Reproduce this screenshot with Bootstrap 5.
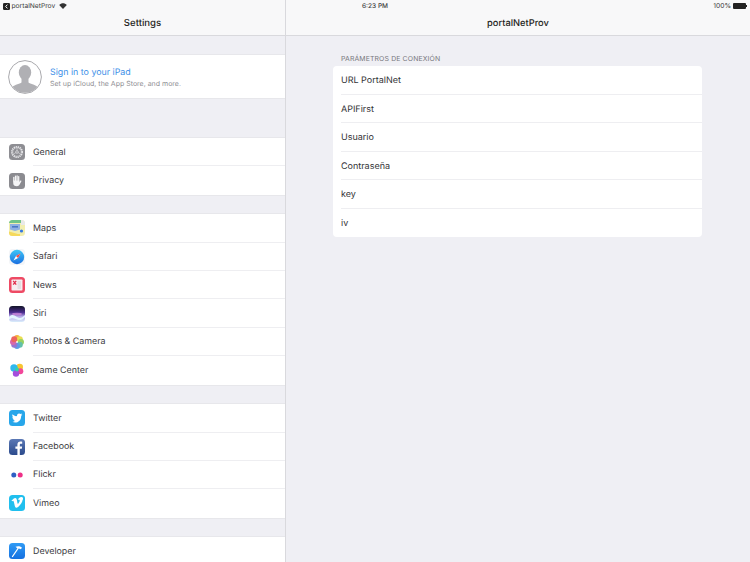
<!DOCTYPE html>
<html lang="en">
<head>
<meta charset="utf-8">
<title>Settings</title>
<link rel="stylesheet" href="https://cdn.jsdelivr.net/npm/bootstrap@5.3.0/dist/css/bootstrap.min.css">
<style>
html,body{height:562px;overflow:hidden}
body{font-family:Inter,"Liberation Sans",sans-serif;background:#efeff4;color:#2b2b2e;font-size:9px;position:relative;text-rendering:geometricPrecision}
.statusline{position:absolute;top:0;left:0;right:0;height:12px;line-height:12px;font-size:6.7px;color:#3a3a3c;z-index:2;padding:0 3px 0 3px}
.statusleft{width:359px;flex:none}
.statusapp{margin:0 4px 0 1.500px}
.statustime{font-weight:500;font-size:6.5px}
.statusright{margin-left:auto;gap:2px}
.statusline svg{flex:none;display:block}
.batterybody{width:12.500px;height:6px;background:#222;border-radius:1px;flex:none}
.batterytip{width:1.200px;height:2px;background:#222;flex:none;margin-left:-1.700px}
.shell{height:562px}
.sidepane{width:286px;flex:none;border-right:1px solid #d9d9dd;height:562px;overflow:hidden}
.mainpane{flex:1 1 auto;min-width:0}
.headbar{height:36px;background:#f8f8f9;border-bottom:1px solid #d9d9dd;padding-top:12px;font-size:9.6px;font-weight:500;color:#1f1f22;line-height:24px;text-align:center}
.headbar-app{font-size:9.3px}
.setgroup{background:#fff;border-top:1px solid #e7e7eb;border-bottom:1px solid #e7e7eb}
.gap-first{margin-top:18px}
.gap-signin{margin-top:38px}
.gap-next{margin-top:17.5px}
.signin{height:45px;padding-left:8px;gap:8px}
.signtitle{color:#3d8fe8;font-size:8.85px;line-height:12px;padding-top:1px}
.signsub{color:#8f8f94;font-size:7px;line-height:9px}
.setrow{height:28.4px;padding-left:8.5px;gap:8.5px}
.setlabel{flex:1 1 auto;height:100%;display:flex;align-items:center;border-bottom:1px solid #eeeef1;font-size:8.9px;color:#3a3a3e;padding-top:1px}
.setrow:last-child .setlabel{border-bottom:0}
.iconbox{width:16px;height:16px;flex:none;display:block}
.formwrap{padding:0 48px 0 47px}
.formhead{font-size:6.9px;letter-spacing:.13px;color:#77777c;line-height:9px;padding:17.500px 0 3.500px 8px;text-transform:uppercase}
.formcard{background:#fff;border-radius:4px;overflow:hidden}
.formrow{height:28.5px;display:flex;align-items:center;margin-left:8px;border-bottom:1px solid #eeeef1;font-size:9px;color:#333336;padding-top:2px}
.formrow:last-child{border-bottom:0}
</style>
</head>
<body>
<div class="statusline d-flex align-items-center">
  <div class="statusleft d-flex align-items-center">
    <svg width="7" height="7" viewBox="0 0 7 7"><rect width="7" height="7" rx="1.200" fill="#222"/><path d="M4.400 1.600 2.700 3.500l1.700 1.900" stroke="#fff" stroke-width="1" fill="none"/></svg>
    <span class="statusapp">portalNetProv</span>
    <svg width="8" height="6" viewBox="0 0 14 11"><path d="M7 11 0 3.500C4-.8 10-.8 14 3.500Z" fill="#333"/></svg>
  </div>
  <div class="statustime">6:23 PM</div>
  <div class="statusright d-flex align-items-center">
    <span>100%</span>
    <div class="batterybody"></div>
    <div class="batterytip"></div>
  </div>
</div>

<div class="shell d-flex">
  <aside class="sidepane">
    <div class="headbar">Settings</div>
    <div class="setgroup gap-first signin d-flex align-items-center">
      <svg width="34" height="34" viewBox="0 0 34 34"><defs><clipPath id="cp"><circle cx="17" cy="17" r="15.800"/></clipPath></defs><circle cx="17" cy="17" r="16.400" fill="#fff" stroke="#a9a9ad" stroke-width="1"/><g clip-path="url(#cp)" fill="#b0b0b4"><ellipse cx="17" cy="12.500" rx="6.200" ry="7.600"/><path d="M13.500 18h7v4.500c3 2 8.500 2.300 9.500 5.500V34H4v-6c1-3.200 6.500-3.500 9.500-5.500Z"/></g></svg>
      <div>
        <div class="signtitle">Sign in to your iPad</div>
        <div class="signsub">Set up iCloud, the App Store, and more.</div>
      </div>
    </div>

    <div class="setgroup gap-signin">
      <div class="setrow d-flex align-items-center">
        <svg class="iconbox" viewBox="0 0 16 16"><rect width="16" height="16" rx="3.500" fill="#8e8e93"/><circle cx="8" cy="8" r="5.200" fill="none" stroke="#e6e6e9" stroke-width="1.600" stroke-dasharray="1.300 .75"/><circle cx="8" cy="8" r="4.300" fill="none" stroke="#e6e6e9" stroke-width=".6"/><path d="M8 4v2.800M4.500 10l2.500-1.400M11.500 10 9 8.600" stroke="#d0d0d4" stroke-width=".7"/><circle cx="8" cy="8" r="1.300" fill="none" stroke="#e6e6e9" stroke-width=".7"/></svg>
        <div class="setlabel">General</div>
      </div>
      <div class="setrow d-flex align-items-center">
        <svg class="iconbox" viewBox="0 0 16 16"><rect width="16" height="16" rx="3.500" fill="#8b8b90"/><path d="M4.800 8V4.300M6.500 7.500V3M8.100 7.500V2.800M9.700 7.800V3.600" stroke="#f5f5f6" stroke-width="1.250" stroke-linecap="round"/><path d="M4.200 7.500h6.100v1.600l.9-1.300c.6-.7 1.500-.1 1.100.7l-1.700 3.100c-.6 1.100-1.400 1.700-2.700 1.700-2.300 0-3.700-1.100-3.700-3.200Z" fill="#f5f5f6"/></svg>
        <div class="setlabel">Privacy</div>
      </div>
    </div>

    <div class="setgroup gap-next">
      <div class="setrow d-flex align-items-center">
        <svg class="iconbox" viewBox="0 0 16 16"><rect width="16" height="16" rx="3.500" fill="#f2eeb0"/><path d="M0 3.500A3.500 3.500 0 0 1 3.500 0H12v3H0Z" fill="#6fc48a"/><path d="M12 0h.5A3.500 3.500 0 0 1 16 3.500V5h-4Z" fill="#e9e9ea"/><path d="M1 4h10v5.500L6 11 1 9.500Z" fill="#8fb0e2"/><rect x="3" y="6" width="6" height="1.600" fill="#4a77c4"/><path d="M0 11.500 9 14h2v2H3.500A3.500 3.500 0 0 1 0 12.500Z" fill="#f5d95c"/><circle cx="12.500" cy="11" r="1.600" fill="#3478e0"/></svg>
        <div class="setlabel">Maps</div>
      </div>
      <div class="setrow d-flex align-items-center">
        <svg class="iconbox" viewBox="0 0 16 16"><defs><linearGradient id="sf" x1="0" y1="0" x2="0" y2="1"><stop offset="0" stop-color="#3ec6f7"/><stop offset="1" stop-color="#1a6fe0"/></linearGradient></defs><rect width="16" height="16" rx="3.500" fill="#f3f5f8"/><circle cx="8" cy="8" r="7.200" fill="url(#sf)"/><path d="M11.500 4.500 9 9 4.500 11.500 7 7Z" fill="#fff"/><path d="M11.500 4.500 9 9 7 7Z" fill="#f0483e"/></svg>
        <div class="setlabel">Safari</div>
      </div>
      <div class="setrow d-flex align-items-center">
        <svg class="iconbox" viewBox="0 0 16 16"><rect width="16" height="16" rx="3.500" fill="#ee4a64"/><rect x="2.500" y="2.500" width="11" height="11" rx=".8" fill="#f7eef0"/><path d="M4.200 3.800l3 3.800M7.200 3.800l-3 3.800" stroke="#e0304c" stroke-width="1.300"/><rect x="8.500" y="4" width="3.500" height="8" fill="#e3dfe2"/></svg>
        <div class="setlabel">News</div>
      </div>
      <div class="setrow d-flex align-items-center">
        <svg class="iconbox" viewBox="0 0 16 16"><defs><linearGradient id="si" x1="0" y1="0" x2="0" y2="1"><stop offset="0" stop-color="#111426"/><stop offset=".4" stop-color="#4b2c8f"/><stop offset=".65" stop-color="#b6a6e8"/><stop offset="1" stop-color="#d9eefb"/></linearGradient></defs><rect width="16" height="16" rx="3.500" fill="url(#si)"/><path d="M0 11c3-3 5-2 8 0s5 1 8-2v2c-3 3.500-6 3.500-8 2.500s-5-2.500-8 0Z" fill="#e3f5ff"/><ellipse cx="8" cy="8" rx="5" ry="1.300" fill="#d68ae0" opacity=".7"/></svg>
        <div class="setlabel">Siri</div>
      </div>
      <div class="setrow d-flex align-items-center">
        <svg class="iconbox" viewBox="0 0 16 16"><rect width="16" height="16" rx="3.500" fill="#fff"/><g opacity=".88"><circle cx="8" cy="4" r="3" fill="#f5a623"/><circle cx="10.800" cy="5.200" r="3" fill="#e8d93a"/><circle cx="12" cy="8" r="3" fill="#8ccb4c"/><circle cx="10.800" cy="10.800" r="3" fill="#4cb9a0"/><circle cx="8" cy="12" r="3" fill="#4a8fe0"/><circle cx="5.200" cy="10.800" r="3" fill="#8a63c9"/><circle cx="4" cy="8" r="3" fill="#d354a0"/><circle cx="5.200" cy="5.200" r="3" fill="#ea4f4a"/></g></svg>
        <div class="setlabel">Photos &amp; Camera</div>
      </div>
      <div class="setrow d-flex align-items-center">
        <svg class="iconbox" viewBox="0 0 16 16"><rect width="16" height="16" rx="3.500" fill="#fff"/><circle cx="10.700" cy="5" r="3.300" fill="#f7c531"/><circle cx="5" cy="6" r="3.700" fill="#2fb8ee"/><circle cx="11.300" cy="9.300" r="3" fill="#f2479a"/><circle cx="7" cy="11.500" r="3.200" fill="#a44fdc"/><circle cx="8" cy="7.500" r="2" fill="#37d3a4"/></svg>
        <div class="setlabel">Game Center</div>
      </div>
    </div>

    <div class="setgroup gap-next">
      <div class="setrow d-flex align-items-center">
        <svg class="iconbox" viewBox="0 0 16 16"><rect width="16" height="16" rx="3.500" fill="#27a6ea"/><path d="M13.300 4.500c-.4.200-.8.300-1.200.3.400-.3.800-.7 1-1.200-.4.300-.9.400-1.400.5a2.200 2.200 0 0 0-3.700 2C6.300 6.500 4.700 5.600 3.600 4.300c-.6 1-.3 2.300.7 3-.4 0-.7-.1-1-.3 0 1.100.8 2 1.800 2.200-.3.100-.7.100-1 0 .3.900 1.100 1.500 2.100 1.500A4.400 4.400 0 0 1 3 11.600c3.700 2.200 9.300.4 9.200-5.900.5-.3.800-.7 1.100-1.200Z" fill="#fff"/></svg>
        <div class="setlabel">Twitter</div>
      </div>
      <div class="setrow d-flex align-items-center">
        <svg class="iconbox" viewBox="0 0 16 16"><defs><linearGradient id="fb" x1="0" y1="0" x2="0" y2="1"><stop offset="0" stop-color="#5a78b5"/><stop offset="1" stop-color="#2b4a8c"/></linearGradient></defs><rect width="16" height="16" rx="3.500" fill="url(#fb)"/><path d="M10.800 16V9.800h2l.3-2.400h-2.300V6c0-.7.200-1.200 1.200-1.200h1.200V2.700c-.2 0-.9-.1-1.800-.1-1.800 0-3 1.100-3 3.100v1.700h-2v2.400h2V16Z" fill="#fff"/></svg>
        <div class="setlabel">Facebook</div>
      </div>
      <div class="setrow d-flex align-items-center">
        <svg class="iconbox" viewBox="0 0 16 16"><rect width="16" height="16" rx="3.500" fill="#fff"/><circle cx="4.800" cy="8" r="2.500" fill="#2f5fc4"/><circle cx="11.200" cy="8" r="2.500" fill="#ee2f87"/></svg>
        <div class="setlabel">Flickr</div>
      </div>
      <div class="setrow d-flex align-items-center">
        <svg class="iconbox" viewBox="0 0 16 16"><rect width="16" height="16" rx="3.500" fill="#20bfee"/><path d="M13.500 5.200c-.1 1.100-.8 2.600-2.300 4.500-1.500 2-2.800 3-3.800 3-.7 0-1.200-.6-1.600-1.800L5 7.600c-.3-1.200-.6-1.800-1-1.800-.1 0-.4.200-.9.500L2.500 5.600C3.900 4.400 5.200 3 6.100 3c1-.1 1.500.6 1.800 2.100.4 2.600.7 3.800 1 3.800.3 0 .6-.5 1.100-1.300.5-.8.700-1.400.7-1.800.1-.7-.2-1.100-.8-1.100-.3 0-.6.100-.9.200.6-2 1.800-2.900 3.400-2.900 1.300.1 1.900.8 1.600 2.200Z" fill="#fff"/></svg>
        <div class="setlabel">Vimeo</div>
      </div>
    </div>

    <div class="setgroup gap-next">
      <div class="setrow d-flex align-items-center">
        <svg class="iconbox" viewBox="0 0 16 16"><defs><linearGradient id="dv" x1="0" y1="0" x2="0" y2="1"><stop offset="0" stop-color="#2f9bf5"/><stop offset="1" stop-color="#1570e0"/></linearGradient></defs><rect width="16" height="16" rx="3.500" fill="url(#dv)"/><path d="M3.500 13.500 9 5.500" stroke="#fff" stroke-width="1.300" stroke-linecap="round"/><path d="M6.500 3.800c2-1 4.500-.8 6.500.9l-1.200 1.500c-1.300-.9-2.200-1-3.300-.6Z" fill="#fff"/></svg>
        <div class="setlabel">Developer</div>
      </div>
    </div>
  </aside>

  <main class="mainpane">
    <div class="headbar headbar-app">portalNetProv</div>
    <div class="formwrap">
      <div class="formhead">Parámetros de conexión</div>
      <div class="formcard">
        <div class="formrow">URL PortalNet</div>
        <div class="formrow">APIFirst</div>
        <div class="formrow">Usuario</div>
        <div class="formrow">Contraseña</div>
        <div class="formrow">key</div>
        <div class="formrow">iv</div>
      </div>
    </div>
  </main>
</div>
<script src="https://cdn.jsdelivr.net/npm/bootstrap@5.3.0/dist/js/bootstrap.bundle.min.js"></script>
</body>
</html>
